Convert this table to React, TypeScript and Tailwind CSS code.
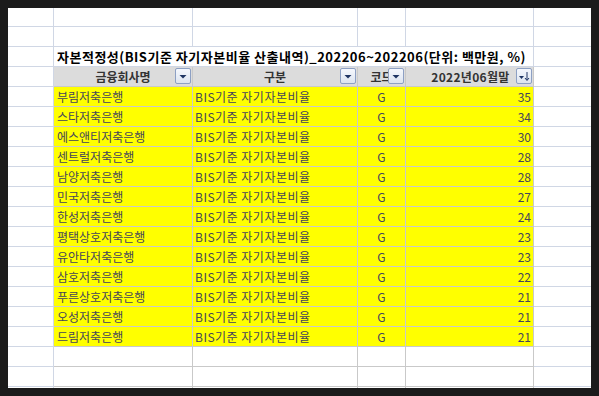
import React from 'react'

const ROWS: [string, number][] = [
  ['부림저축은행', 35],
  ['스타저축은행', 34],
  ['에스앤티저축은행', 30],
  ['센트럴저축은행', 28],
  ['남양저축은행', 28],
  ['민국저축은행', 27],
  ['한성저축은행', 24],
  ['평택상호저축은행', 23],
  ['유안타저축은행', 23],
  ['삼호저축은행', 22],
  ['푸른상호저축은행', 21],
  ['오성저축은행', 21],
  ['드림저축은행', 21],
]

function FilterButton({ sort = false }: { sort?: boolean }) {
  return (
    <div className="absolute right-[1px] top-[1px] w-4 h-4 rounded-[2px] border border-[#8da0c4] bg-gradient-to-b from-[#f5f8fd] to-[#dde4f0] flex items-center justify-center">
      {sort ? (
        <svg width="14" height="14" viewBox="0 0 14 14">
          <path d="M2 7h5L4.5 10z" fill="#1f3564" />
          <path d="M10 3v8" stroke="#1f3564" strokeWidth="1" />
          <path d="M8 9l2 2.5L12 9" stroke="#1f3564" strokeWidth="1" fill="none" />
        </svg>
      ) : (
        <svg width="14" height="14" viewBox="0 0 14 14">
          <path d="M3.5 6h7L7 9.5z" fill="#1f3564" />
        </svg>
      )}
    </div>
  )
}

function BlankRow({ h = 'h-5', table = false }: { h?: string; table?: boolean }) {
  const tb = table ? 'border-[#c9c9c9]' : 'border-[#d0d7e5]'
  return (
    <div className={`flex ${h} shrink-0`}>
      <div className="w-[46px] shrink-0 border-r border-b border-[#d0d7e5]" />
      <div className={`w-[139px] shrink-0 border-r border-b ${tb}`} />
      <div className={`w-[165px] shrink-0 border-r border-b ${tb}`} />
      <div className={`w-[48px] shrink-0 border-r border-b ${tb}`} />
      <div className={`w-[128px] shrink-0 border-r border-b ${tb}`} />
      <div className="w-[58px] shrink-0 border-b border-[#d0d7e5]" />
    </div>
  )
}

export default function App() {
  return (
    <div className="w-[599px] h-[396px] bg-[#1b1b1b] pt-2 pl-2 overflow-hidden [font-family:'Noto_Sans_CJK_KR','Noto_Sans',sans-serif]">
      <div className="w-[583px] h-[380px] bg-white overflow-hidden flex flex-col">
        <BlankRow h="h-[19px]" />
        <BlankRow />

        {/* Title */}
        <div className="flex h-5 shrink-0">
          <div className="w-[46px] shrink-0 border-r border-b border-[#d0d7e5]" />
          <div className="w-[480px] shrink-0 border-r border-b border-[#d0d7e5] pl-[3px] flex items-center text-[13px] font-bold text-black whitespace-nowrap leading-none tracking-[0.5px]">
            자본적정성(BIS기준 자기자본비율 산출내역)_202206~202206(단위: 백만원, %)
          </div>
          <div className="w-[58px] shrink-0 border-b border-[#d0d7e5]" />
        </div>

        {/* Header */}
        <div className="flex h-5 shrink-0 text-[12px] font-bold text-[#333] leading-none">
          <div className="w-[46px] shrink-0 border-r border-b border-[#d0d7e5]" />
          <div className="relative w-[139px] shrink-0 bg-[#dcdcdc] border-r border-b border-[#c9c9c9] flex items-center justify-center">
            금융회사명
            <FilterButton />
          </div>
          <div className="relative w-[165px] shrink-0 bg-[#dcdcdc] border-r border-b border-[#c9c9c9] flex items-center justify-center">
            구분
            <FilterButton />
          </div>
          <div className="relative w-[48px] shrink-0 bg-[#dcdcdc] border-r border-b border-[#c9c9c9] flex items-center justify-center">
            코드
            <FilterButton />
          </div>
          <div className="relative w-[128px] shrink-0 bg-[#dcdcdc] border-r border-b border-[#c9c9c9] flex items-center justify-center pl-[2px] tracking-[0.3px]">
            2022년06월말
            <FilterButton sort />
          </div>
          <div className="w-[58px] shrink-0 border-b border-[#d0d7e5]" />
        </div>

        {/* Data */}
        {ROWS.map(([name, v]) => (
          <div key={name} className="flex h-5 shrink-0 text-[12px] text-[#45455c] leading-none">
            <div className="w-[46px] shrink-0 border-r border-b border-[#d0d7e5]" />
            <div className="w-[139px] shrink-0 bg-[#ffff00] border-r border-b border-[#c9c9c9] pl-[3px] flex items-center whitespace-nowrap">
              {name}
            </div>
            <div className="w-[165px] shrink-0 bg-[#ffff00] border-r border-b border-[#c9c9c9] pl-[2px] flex items-center whitespace-nowrap tracking-[0.5px]">
              BIS기준 자기자본비율
            </div>
            <div className="w-[48px] shrink-0 bg-[#ffff00] border-r border-b border-[#c9c9c9] flex items-center justify-center">
              G
            </div>
            <div className="w-[128px] shrink-0 bg-[#ffff00] border-r border-b border-[#c9c9c9] pr-[2px] flex items-center justify-end">
              {v}
            </div>
            <div className="w-[58px] shrink-0 border-b border-[#d0d7e5]" />
          </div>
        ))}

        <BlankRow table />
        <BlankRow table />
        <BlankRow table />
      </div>
    </div>
  )
}
